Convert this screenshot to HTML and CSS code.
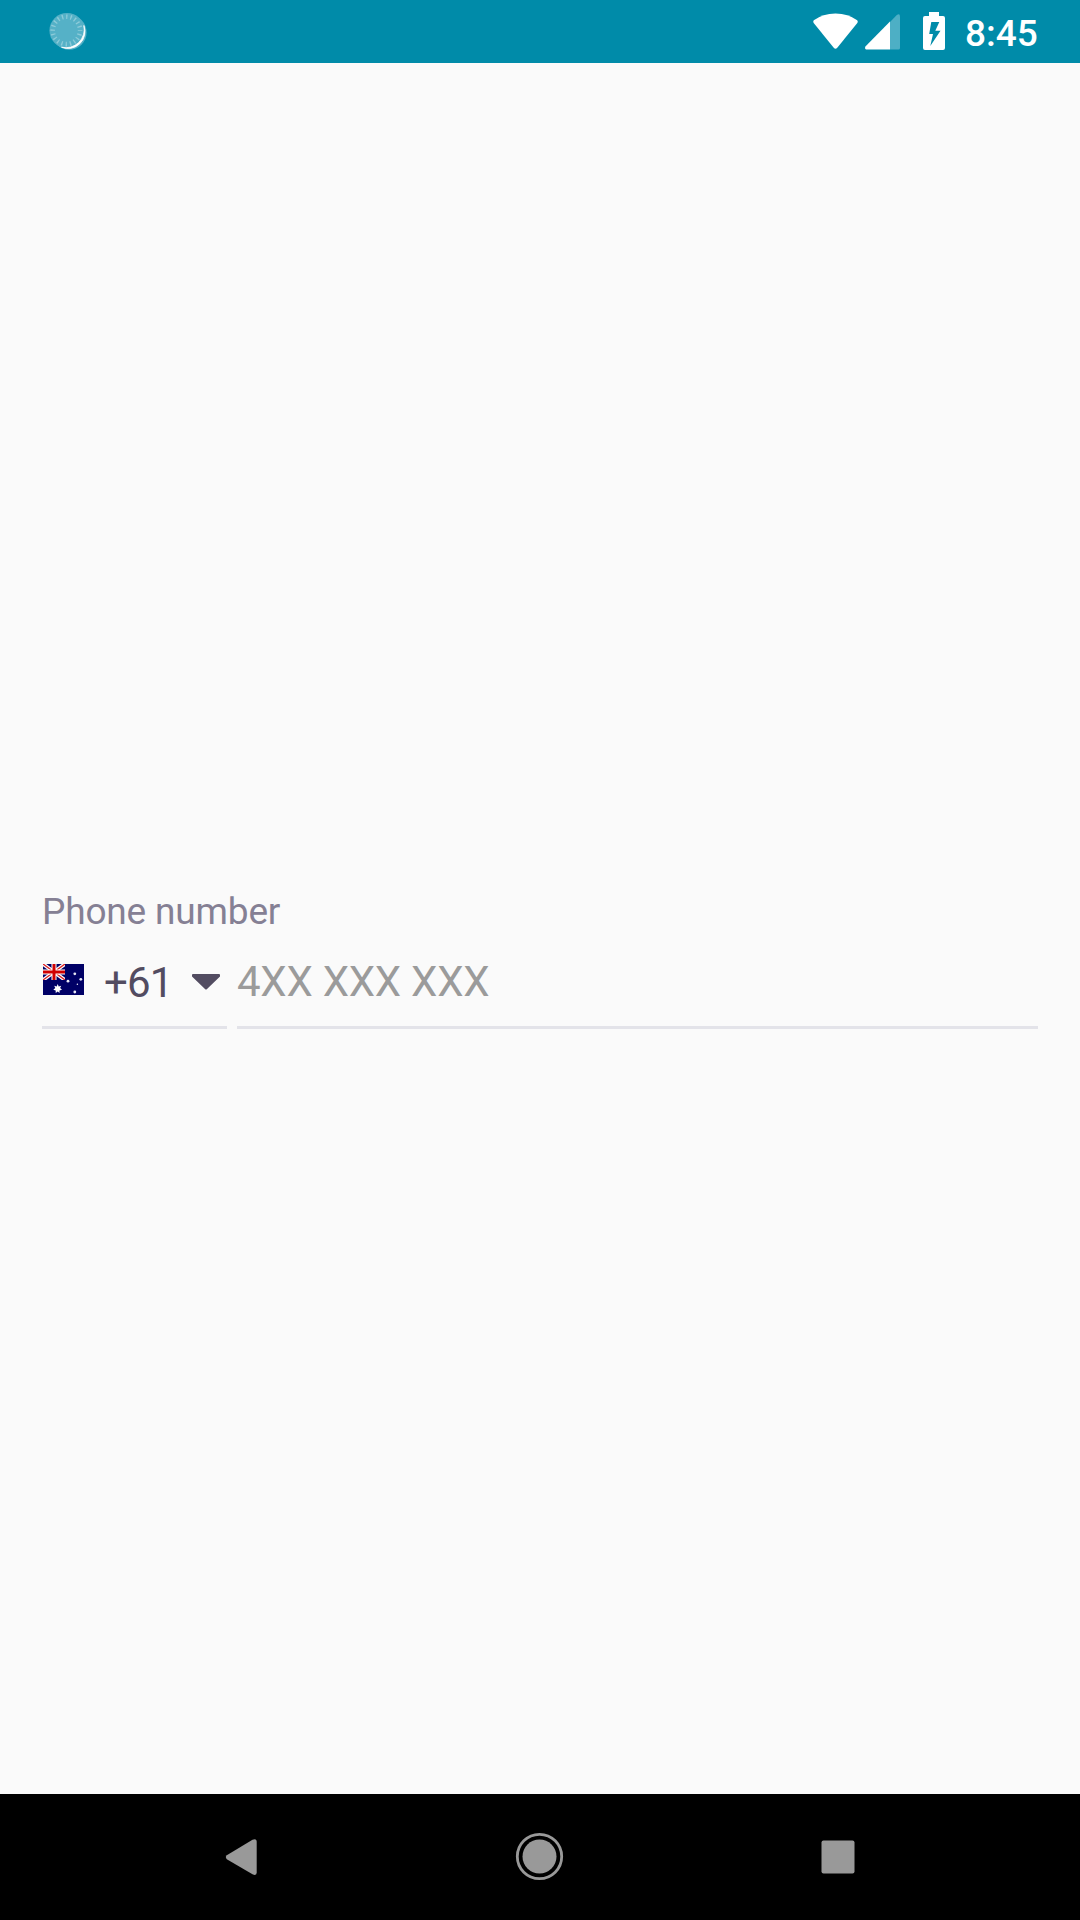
FILE: index.html
```html
<!DOCTYPE html>
<html lang="en">
<head>
<meta charset="utf-8">
<title>Phone number</title>
<link rel="stylesheet" href="styles.css">
</head>
<body>
<header class="status-bar">
  <svg class="icon-sync" width="40" height="40" viewBox="0 0 40 40">
    <circle cx="20" cy="19.6" r="17.6" fill="#55b1c7"/>
    <circle cx="22.2" cy="21.4" r="17.4" fill="#55b1c7"/>
    <path d="M36.9 14.5A17 17 0 0 1 14.5 36.2A18.4 18.4 0 0 0 36.9 14.5Z" fill="#fff" stroke="#fff" stroke-width=".8" stroke-linejoin="round"/>
    <circle cx="19.4" cy="19.4" r="13.7" fill="none" stroke="#8dcbd9" stroke-width="4.6" stroke-dasharray="1.3 3.004" stroke-dashoffset=".65"/>
  </svg>
  <div class="status-icons">
    <svg class="icon-wifi" width="45" height="37" viewBox="0 0 46 37">
      <path d="M.8 7.1Q10 .1 23 .1T45.2 7.1Q46.2 8.3 45.3 9.7L24.8 35.2Q23 37 21.2 35.2L.7 9.7Q-.2 8.3.8 7.1Z" fill="#fff"/>
    </svg>
    <svg class="icon-signal" width="35" height="36" viewBox="0 0 35 36">
      <path d="M25 8L31.8 1Q35 -.8 35 2.5V34Q35 35.5 33.5 35.5H25Z" fill="#4dafc5"/>
      <path d="M25 7.5V35.5H1.2Q-.6 35 .4 32.5Z" fill="#fff"/>
    </svg>
    <svg class="icon-battery" width="22" height="38" viewBox="0 0 22 38">
      <path d="M6 0H16V4H20Q22 4 22 6V36Q22 38 20 38H2Q0 38 0 36V6Q0 4 2 4H6ZM8.3 10L6.2 22H10L7.3 34L17.5 18.8H12.3L16.3 10Z" fill="#fff" fill-rule="evenodd"/>
    </svg>
  </div>
  <span class="clock">8:45</span>
</header>
<main class="content">
  <div class="label">Phone number</div>
  <div class="fields">
    <div class="country">
      <svg class="flag" width="41" height="31" viewBox="0 0 41 31">
        <path d="M0 0H41V31H0Z" fill="#006"/>
        <path d="M0 0L22 16M22 0L0 16" stroke="#fff" stroke-width="3.8"/>
        <path d="M0 0L22 16M22 0L0 16" stroke="#d22" stroke-width="1.4"/>
        <path d="M11 0V16M0 8H22" stroke="#fff" stroke-width="5"/>
        <path d="M11 0V16M0 8H22" stroke="#d00000" stroke-width="3"/>
        <path d="M22 0H41V31H0V16H22Z" fill="#006"/>
        <path d="M14.7 20L15.7 22.4L18.2 21.8L17.1 24.1L19 25.8L16.5 26.4V29L14.7 27.4L12.7 29V26.4L10.3 25.8L12.3 24.1L11.2 21.8L13.7 22.4Z" fill="#fff"/>
        <g fill="#e9e9f5"><circle cx="31.8" cy="9.8" r="1.4"/><circle cx="25" cy="17.2" r="1.4"/><circle cx="37.8" cy="15.3" r="1.4"/><circle cx="31.8" cy="28" r="1.4"/><circle cx="34.4" cy="20.2" r=".75"/></g>
      </svg>
      <span class="code">+61</span>
      <svg class="caret" width="28" height="16" viewBox="0 0 28 16">
        <path d="M1 0H27Q28 0 28 1V2.5L15 15Q14 16 13 15L0 2.5V1Q0 0 1 0Z" fill="#524c61"/>
      </svg>
    </div>
    <div class="number">4XX XXX XXX</div>
  </div>
</main>
<nav class="nav-bar">
  <svg width="324" height="126" viewBox="0 0 324 126">
    <path d="M252.5 45.8Q256.7 44 256.7 48V78.5Q256.7 82.2 252.5 80.3L226.8 65.2Q224.8 63 226.8 61.2Z" fill="#999"/>
  </svg>
  <svg width="100" height="126" viewBox="0 0 100 126">
    <circle cx="49.5" cy="62.5" r="22.2" fill="none" stroke="#999" stroke-width="2.8"/>
    <circle cx="49.5" cy="62.5" r="17" fill="#999"/>
  </svg>
  <svg width="324" height="126" viewBox="0 0 324 126">
    <rect x="65.5" y="46.5" width="33" height="33" rx="2" fill="#999"/>
  </svg>
</nav>
</body>
</html>
```
FILE: styles.css
```css
* {
  box-sizing: border-box;
}

body {
  display: flex;
  flex-direction: column;
  width: 1080px;
  height: 1920px;
  margin: 0;
  background: #fafafa;
  font-family: Roboto, sans-serif;
}

svg {
  display: block;
  flex: none;
}

.status-bar {
  display: flex;
  flex: none;
  align-items: flex-start;
  height: 63px;
  padding: 0 41px 0 47px;
  background: #008ba9;
}

.icon-sync {
  margin-top: 11px;
}

.status-icons {
  display: flex;
  margin-left: auto;
}

.icon-wifi {
  margin-top: 13px;
}

.icon-signal {
  margin: 14px 0 0 7px;
}

.icon-battery {
  margin: 12px 0 0 23px;
}

.clock {
  width: 74px;
  margin: 9px 0 0 20px;
  color: #fff;
  font-size: 37px;
  font-weight: 500;
  line-height: 50px;
  white-space: nowrap;
}

.content {
  flex: 1;
  padding: 824px 42px 0;
}

.label {
  color: #858094;
  font-size: 37px;
  letter-spacing: -0.17px;
  line-height: 50px;
}

.fields {
  display: flex;
  gap: 10px;
  height: 92px;
  font-size: 42px;
  line-height: 50px;
}

.country,
.number {
  display: flex;
  align-items: flex-start;
  border-bottom: 3px solid #e3e3e9;
}

.country {
  width: 185px;
  color: #524c61;
}

.flag {
  margin: 27px 0 0 1px;
}

.code {
  width: 88px;
  margin: 21px 0 0 20px;
  letter-spacing: -0.8px;
}

.caret {
  margin-top: 37px;
}

.number {
  flex: 1;
  padding-top: 20px;
  color: #9b9b9b;
  letter-spacing: -0.25px;
}

.nav-bar {
  display: flex;
  flex: none;
  justify-content: space-between;
  height: 126px;
  background: #000;
}

.nav-bar svg:nth-child(2) {
  margin: 0 auto;
}
```
